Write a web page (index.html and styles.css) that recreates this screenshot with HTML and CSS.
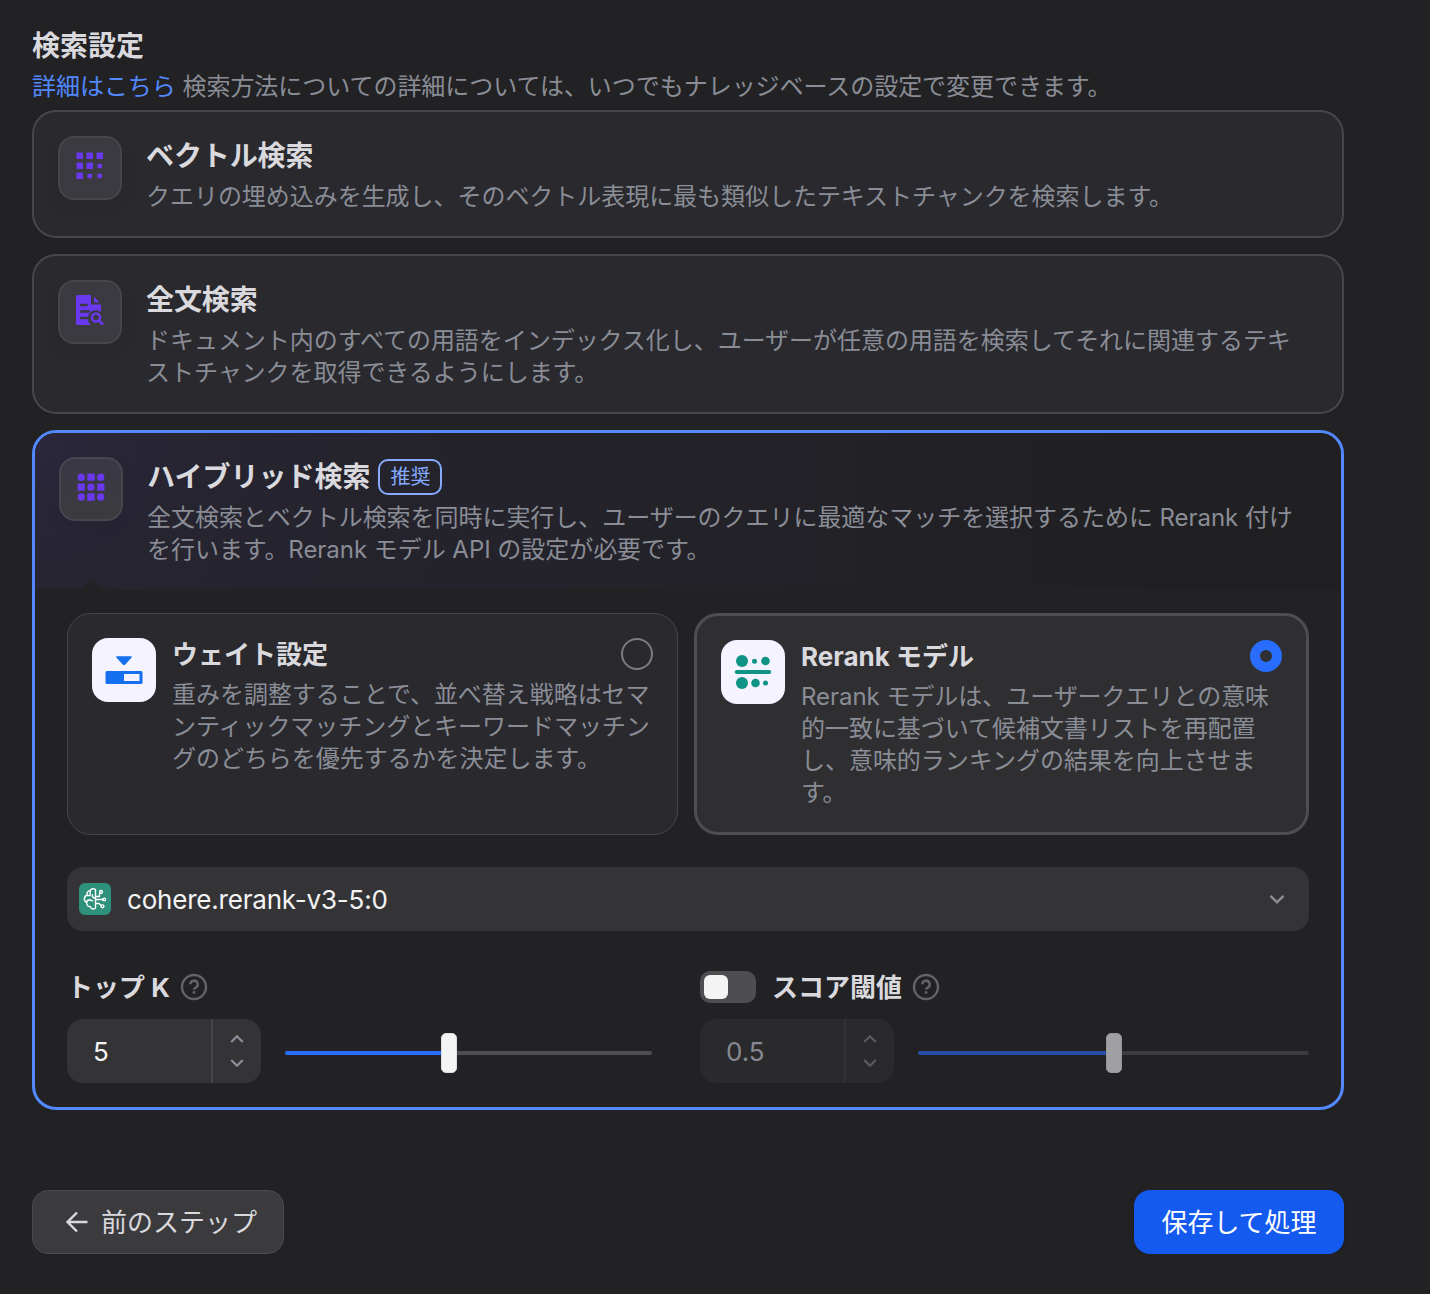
FILE: index.html
```html
<!DOCTYPE html>
<html lang="ja">
<head>
<meta charset="utf-8">
<title>検索設定</title>
<link rel="stylesheet" href="styles.css">
</head>
<body>
<main class="page">
  <h1 class="heading">検索設定</h1>
  <p class="lead"><a class="link">詳細はこちら</a> 検索方法についての詳細については、いつでもナレッジベースの設定で変更できます。</p>

  <div class="methods">
    <section class="card">
      <div class="icon-tile">
        <svg width="40" height="40" viewBox="0 0 40 40" fill="#6938ef"><path d="M6.500 4.500H13V11H6.500zM16.500 4.500H23V11h-6.500zM26.500 4.500H33V11h-6.500zM6.500 14.500H13V21H6.500zM16.500 14.500H23V21h-6.500zM27.500 15.800h4.500v4.400h-4.500zM6.500 24.500H13V31H6.500zM17.500 25.800H22v4.400h-4.500zM27.500 25.800h4.500v4.400h-4.500z"/></svg>
      </div>
      <div class="card-text">
        <h2 class="title">ベクトル検索</h2>
        <p class="desc">クエリの埋め込みを生成し、そのベクトル表現に最も類似したテキストチャンクを検索します。</p>
      </div>
    </section>

    <section class="card">
      <div class="icon-tile">
        <svg width="40" height="40" viewBox="0 0 40 40"><path fill="#6938ef" d="M7.500 3H21v9.500h10V20a8 8 0 0 0-10 13H7.500a1.500 1.500 0 0 1-1.500-1.500v-27A1.500 1.500 0 0 1 7.500 3zM24 4.500l5.500 6H24z"/><path d="M11 13h5.500M11 19.500h8M11 26h6" stroke="#3a3a40" stroke-width="2.500" stroke-linecap="round"/><circle cx="26" cy="25.500" r="4" fill="none" stroke="#6938ef" stroke-width="2.600"/><path d="M29 28.500l3.200 3.200" stroke="#6938ef" stroke-width="2.800" stroke-linecap="round"/></svg>
      </div>
      <div class="card-text">
        <h2 class="title">全文検索</h2>
        <p class="desc">ドキュメント内のすべての用語をインデックス化し、ユーザーが任意の用語を検索してそれに関連するテキ<br>ストチャンクを取得できるようにします。</p>
      </div>
    </section>

    <section class="card-active">
      <div class="card-head">
        <div class="icon-tile">
          <svg width="40" height="40" viewBox="0 0 40 40" fill="#6938ef"><circle cx="10.300" cy="8.300" r="3.700"/><path d="M16.300 4.500h7.400v7.300h-7.400zM6.500 14.500h7.300v7.300H6.500zM26.200 14.500h7.300v7.300h-7.300zM16.300 24.300h7.400v7.400h-7.400z"/><circle cx="29.700" cy="8.300" r="3.700"/><circle cx="20" cy="18.200" r="3.600"/><circle cx="10.300" cy="28" r="3.700"/><circle cx="29.700" cy="28" r="3.700"/></svg>
        </div>
        <div class="card-text">
          <h2 class="title">ハイブリッド検索<span class="badge">推奨</span></h2>
          <p class="desc">全文検索とベクトル検索を同時に実行し、ユーザーのクエリに最適なマッチを選択するために Rerank 付け<br>を行います。Rerank モデル API の設定が必要です。</p>
        </div>
        <svg class="notch" width="24" height="11" viewBox="0 0 24 11"><path fill="#222225" d="M0 11c2 0 3-1 4.500-2.500l5-5.500c1.700-1.900 3.300-1.900 5 0l5 5.500C21 10 22 11 24 11z"/></svg>
      </div>

      <div class="card-body">
        <div class="options">
          <div class="option">
            <div class="option-icon">
              <svg width="40" height="40" viewBox="0 0 40 40"><path fill="#1570ef" d="M13 6.200h14c1 0 1.200.8.600 1.400l-6.300 7c-.8.900-1.800.9-2.600 0l-6.300-7c-.6-.6-.4-1.400.6-1.400z"/><rect x="1.500" y="21" width="37" height="13" rx="1.500" fill="#1570ef"/><path fill="#f5f3ff" d="M20 24h15.500v7H20z"/></svg>
            </div>
            <div class="option-text">
              <div class="option-top"><h3 class="option-title">ウェイト設定</h3><span class="radio"></span></div>
              <p class="desc">重みを調整することで、並べ替え戦略はセマ<br>ンティックマッチングとキーワードマッチン<br>グのどちらを優先するかを決定します。</p>
            </div>
          </div>
          <div class="option option-on">
            <div class="option-icon">
              <svg width="40" height="40" viewBox="0 0 40 40" fill="#0e9384"><circle cx="9" cy="9" r="6"/><circle cx="21.500" cy="9.200" r="2.500"/><circle cx="32.500" cy="9" r="4.300"/><rect x="1.800" y="18" width="36.400" height="4" rx="2"/><circle cx="9" cy="31" r="6"/><circle cx="22.500" cy="31" r="4.300"/><circle cx="32.500" cy="31" r="2.500"/></svg>
            </div>
            <div class="option-text">
              <div class="option-top"><h3 class="option-title">Rerank モデル</h3><span class="radio radio-on"></span></div>
              <p class="desc">Rerank モデルは、ユーザークエリとの意味<br>的一致に基づいて候補文書リストを再配置<br>し、意味的ランキングの結果を向上させま<br>す。</p>
            </div>
          </div>
        </div>

        <div class="select">
          <span class="model-icon">
            <svg width="32" height="32" viewBox="0 0 32 32" fill="none" stroke="#fff" stroke-width="1.400" stroke-linecap="round" stroke-linejoin="round"><path d="M16.500 6.500V25M16.500 7c-1.200-2-4.600-1.700-5.400.8-2.700.2-3.600 2.300-2.800 4.200-3.800 1.200-3.800 6.200-.5 7.400-.5 2.900 1.200 4.400 3.300 4.100 1.200 2.900 4.400 3.200 5.400 1.200M11.200 8v3.200M8.300 12.500h2.900M7.800 19.300c0-1.500 1-2.300 2.600-2.300M13.500 11.800c-.8 1.800.2 3 3 3.400M13.500 17.800c-1.200.1-2-.4-2.300-1.400M16.500 13.500h4v-3M16.500 16.500h7.300M16.500 20.500H20l2.300 2"/><circle cx="22" cy="8.900" r="1.400"/><circle cx="25.200" cy="16.500" r="1.400"/><circle cx="23.500" cy="23.300" r="1.400"/></svg>
          </span>
          <span class="select-text">cohere.rerank-v3-5:0</span>
          <svg width="16" height="16" viewBox="0 0 16 16"><path d="M1.500 4.800L8 11.300l6.500-6.500" fill="none" stroke="#8c8f97" stroke-width="2.400"/></svg>
        </div>

        <div class="params">
          <div class="param">
            <div class="param-label"><span class="label-text">トップ K</span>
              <svg class="help" width="28" height="28" viewBox="0 0 28 28"><circle cx="14" cy="14" r="12" fill="none" stroke="#626469" stroke-width="2.400"/><path d="M10.300 11.300a3.700 3.700 0 1 1 5 3.500c-.9.400-1.300.8-1.300 1.900" fill="none" stroke="#626469" stroke-width="2.500"/><path d="M12.700 18.200h2.600v2.500h-2.600z" fill="#626469"/></svg>
            </div>
            <div class="controls">
              <div class="number"><span class="value">5</span><span class="steps">
                <svg width="14" height="8" viewBox="0 0 14 8"><path d="M1.200 7L7 1.300 12.800 7"/></svg>
                <svg width="14" height="8" viewBox="0 0 14 8"><path d="M1.200 1L7 6.700 12.800 1"/></svg></span></div>
              <div class="slider"><span class="fill" style="width:156px"></span><span class="thumb"></span><span class="rest"></span></div>
            </div>
          </div>
          <div class="param param-wide">
            <div class="param-label"><span class="toggle"><span class="knob"></span></span><span class="label-text">スコア閾値</span>
              <svg class="help" width="28" height="28" viewBox="0 0 28 28"><circle cx="14" cy="14" r="12" fill="none" stroke="#626469" stroke-width="2.400"/><path d="M10.300 11.300a3.700 3.700 0 1 1 5 3.500c-.9.400-1.300.8-1.300 1.900" fill="none" stroke="#626469" stroke-width="2.500"/><path d="M12.700 18.200h2.600v2.500h-2.600z" fill="#626469"/></svg>
            </div>
            <div class="controls disabled">
              <div class="number"><span class="value">0.5</span><span class="steps">
                <svg width="14" height="8" viewBox="0 0 14 8"><path d="M1.200 7L7 1.300 12.800 7"/></svg>
                <svg width="14" height="8" viewBox="0 0 14 8"><path d="M1.200 1L7 6.700 12.800 1"/></svg></span></div>
              <div class="slider"><span class="fill" style="width:188px"></span><span class="thumb"></span><span class="rest"></span></div>
            </div>
          </div>
        </div>
      </div>
    </section>
  </div>

  <footer class="actions">
    <button class="btn btn-back"><svg width="24" height="24" viewBox="0 0 24 24"><path d="M22.500 12H3M12 2.500L2.500 12l9.500 9.500" fill="none" stroke="#d9d9de" stroke-width="2.400"/></svg><span class="label-text">前のステップ</span></button>
    <button class="btn btn-save"><span class="label-text">保存して処理</span></button>
  </footer>
</main>
</body>
</html>
```
FILE: styles.css
```css
* { box-sizing: border-box; }
body {
  margin: 0;
  background: #222225;
  color: #d9d9de;
  font-family: Inter, "Noto Sans CJK JP", sans-serif;
}
h1, h2, h3, p { margin: 0; }
svg { display: block; flex: none; }
.page { width: 1344px; padding: 26px 0 0 32px; }
.heading { font-size: 28px; line-height: 40px; font-weight: 700; }
.lead, .desc {
  font-size: 24px;
  line-height: 32px;
  letter-spacing: -.04px;
  color: #8a8d96;
  white-space: nowrap;
}
.lead { margin: 5px 0 7px; }
.desc { padding-top: 1px; margin-bottom: -1px; }
.link { color: #5289ff; }
.methods { display: flex; flex-direction: column; gap: 16px; }
.card {
  display: flex;
  gap: 24px;
  padding: 24px;
  border: 2px solid #46464b;
  border-radius: 24px;
  background: #29292e;
}
.icon-tile {
  flex: none;
  width: 64px;
  height: 64px;
  padding: 10px 10px;
  border: 2px solid #45454a;
  border-radius: 16px;
  background: #3a3a40;
  box-shadow: 0 8px 16px rgba(0, 0, 0, .06);
}
.title {
  display: flex;
  align-items: center;
  gap: 8px;
  height: 40px;
  margin-bottom: 4px;
  font-size: 28px;
  line-height: 40px;
  font-weight: 700;
  letter-spacing: -.1px;
}
.card-active {
  border: 3px solid #5289ff;
  border-radius: 24px;
  overflow: hidden;
}
.card-head {
  position: relative;
  display: flex;
  gap: 24px;
  padding: 24px;
  background: radial-gradient(circle at 0 0, #2b273d 0, rgba(39, 37, 51, .5) 160px, rgba(38, 36, 48, 0) 420px), linear-gradient(90deg, #25242d 0, #24232b 40%, #202023 85%, #202023 100%);
}
.card-head .icon-tile { background: linear-gradient(#3a3845, #3b3b3e); border-color: #47464f; }
.card-head .title { letter-spacing: 0; }
.notch { position: absolute; left: 44px; bottom: 0; }
.badge {
  height: 36px;
  padding: 0 10px;
  border: 2px solid #84abff;
  border-radius: 10px;
  color: #84abff;
  font-size: 20px;
  line-height: 33px;
  font-weight: 400;
}
.card-body { padding: 24px 32px; }
.options { display: flex; gap: 16px; }
.option {
  flex: 1 1 0;
  display: flex;
  gap: 16px;
  padding: 24px;
  border: 1px solid #46464b;
  border-radius: 24px;
  background: #29292e;
}
.option-on { border: 3px solid #4e4e51; background: #2f2f31; }
.option-icon {
  flex: none;
  width: 64px;
  height: 64px;
  padding: 12px;
  border-radius: 16px;
  background: #f5f3ff;
}
.option-text { flex: 1; min-width: 0; }
.option-top { display: flex; justify-content: space-between; height: 32px; margin-bottom: 8px; }
.option-title { padding-top: 1px; font-size: 26px; line-height: 32px; font-weight: 700; }
.radio { width: 32px; height: 32px; border: 2px solid #7d7d80; border-radius: 50%; }
.radio-on { border: 10px solid #296dff; }
.select {
  display: flex;
  align-items: center;
  height: 64px;
  margin-top: 32px;
  padding: 0 24px 0 12px;
  border-radius: 16px;
  background: #343437;
}
.model-icon { width: 32px; height: 32px; border-radius: 6px; background: #2d917b; }
.select-text {
  flex: 1;
  margin-left: 16px;
  padding-top: 2px;
  color: #f4f4f5;
  font-size: 26px;
  line-height: 32px;
  letter-spacing: -.2px;
}
.params { display: flex; gap: 48px; margin-top: 40px; }
.param { width: 585px; }
.param-wide { width: 609px; }
.param-label { display: flex; align-items: center; height: 32px; font-size: 26px; line-height: 32px; font-weight: 700; }
.label-text { padding-top: 2px; }
.help { margin-left: 10px; }
.toggle {
  width: 56px;
  height: 32px;
  margin-right: 16px;
  padding: 4px;
  border-radius: 10px;
  background: #4e4e51;
}
.knob { display: block; width: 24px; height: 24px; border-radius: 6px; background: #f4f4f5; }
.controls { display: flex; align-items: center; gap: 24px; margin-top: 16px; }
.number {
  flex: none;
  display: flex;
  width: 194px;
  height: 64px;
  border-radius: 16px;
  background: #343437;
}
.value { width: 144px; padding-left: 26px; color: #f4f4f5; font-size: 26px; line-height: 66px; }
.steps {
  flex: 1;
  display: flex;
  flex-direction: column;
  align-items: center;
  justify-content: center;
  gap: 16px;
  border-left: 2px solid #454548;
}
.steps path { fill: none; stroke: #8c8f97; stroke-width: 2.2; }
.slider { flex: 1; display: flex; align-items: center; padding-top: 4px; }
.fill, .rest { height: 4px; background: #296dff; border-radius: 2px 0 0 2px; }
.rest { flex: 1; background: #4e4e51; border-radius: 0 2px 2px 0; }
.thumb { width: 16px; height: 40px; border-radius: 5px; background: #f4f4f5; border: 1px solid #dedee0; }
.disabled .number { background: #2a2a2d; }
.disabled .value { color: #868991; }
.disabled .steps { border-color: #323235; }
.disabled .steps path { stroke: #5a5c61; }
.disabled .fill { background: #264ea8; }
.disabled .rest { background: #3c3c3f; }
.disabled .thumb { background: #a0a0a2; border-color: #959597; }
.actions { display: flex; justify-content: space-between; margin-top: 80px; }
.btn {
  display: flex;
  align-items: center;
  justify-content: center;
  height: 64px;
  padding: 0;
  border: 0;
  border-radius: 16px;
  font: 400 26px/32px Inter, "Noto Sans CJK JP", sans-serif;
}
.btn-back { gap: 12px; width: 252px; padding-left: 6px; border: 1px solid #4b4b4e; background: #3b3b3e; color: #d9d9de; }
.btn-save { width: 210px; background: #155aef; color: #fff; box-shadow: 0 2px 4px rgba(0, 0, 0, .15); }
```
